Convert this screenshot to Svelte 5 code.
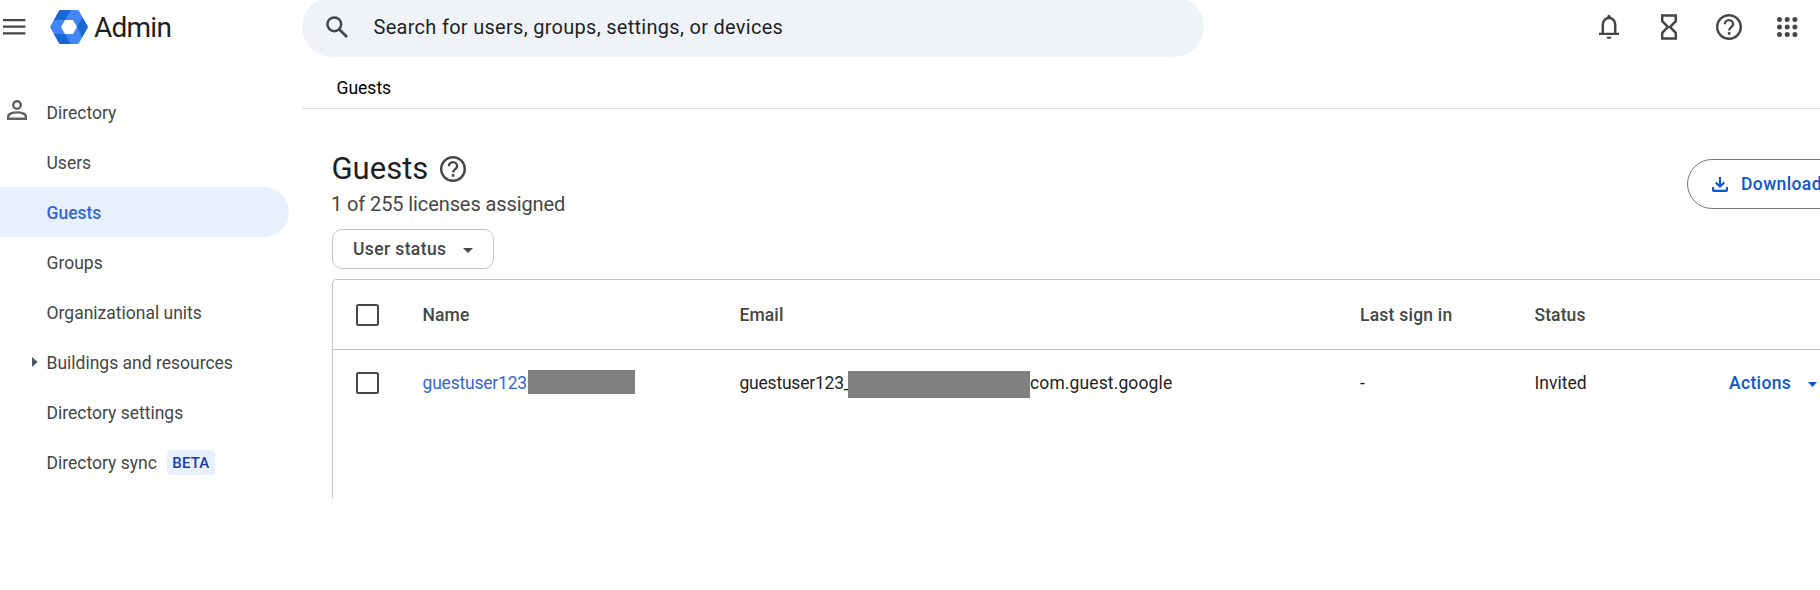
<script>
  const nav = [
    { label: 'Directory', icon: true },
    { label: 'Users' },
    { label: 'Guests', active: true },
    { label: 'Groups' },
    { label: 'Organizational units' },
    { label: 'Buildings and resources', expandable: true },
    { label: 'Directory settings' },
    { label: 'Directory sync', badge: 'BETA' }
  ];
</script>

{#snippet help()}
  <svg class="help" width="26" height="26" viewBox="0 0 26 26" fill="none" stroke="#444746">
    <circle cx="13" cy="13" r="11.8" stroke-width="2.4" />
    <path d="M8.9 10.3A4.1 4.1 0 0 1 17.1 10.2C17.1 13 13.1 13.3 13.1 16.6" stroke-width="2.4" />
    <rect x="11.8" y="18.1" width="2.6" height="2.6" fill="#444746" stroke="none" />
  </svg>
{/snippet}

<div class="page">
  <header>
    <div class="brand">
      <svg width="24" height="18" viewBox="0 0 24 18" fill="#444746">
        <path d="M1 1h22.4v2.2H1zM1 7.6h22.4v2.2H1zM1 14.2h22.4v2.2H1z" />
      </svg>
      <svg class="logo" width="38" height="34" viewBox="0 0 38 34">
        <path fill="#4285f4" fill-rule="evenodd" d="M10.8 0h16.4q1.3 0 2 1.2l8.1 14.5q.8 1.3 0 2.6l-8.1 14.5q-.7 1.2-2 1.2H10.8q-1.3 0-2-1.2L.7 18.3q-.8-1.3 0-2.6L8.8 1.2Q9.5 0 10.8 0zM15 10l-4 7 4 7h8l4-7-4-7z" />
        <path fill="#1967d2" d="M10.8 0H20.8L15 10H4L8.8 1.2Q9.5 0 10.8 0zM32.4 7.2l4.9 8.5q.8 1.3 0 2.6L32.3 27 27 17zM4 24h11l5.8 10h-10q-1.3 0-2-1.2z" />
      </svg>
      <span>Admin</span>
    </div>
    <div class="search">
      <svg width="22" height="22" viewBox="0 0 22 22" fill="none" stroke="#444746" stroke-width="2.5">
        <circle cx="8.3" cy="8.3" r="6.9" />
        <path d="M13.2 13.2l7.8 7.8" stroke-width="2.8" />
      </svg>
      <span>Search for users, groups, settings, or devices</span>
    </div>
    <div class="tools">
      <svg width="20" height="26" viewBox="0 0 20 26" fill="#444746">
        <path d="M0 18.7h20v2.4H0zM7.5 22.7h5a2.5 2.2 0 0 1-5 0zM8.3 3V2.4a1.7 1.7 0 0 1 3.4 0V3z" />
        <path d="M3.8 19.5v-9a6.2 6.4 0 0 1 12.4 0v9" fill="none" stroke="#444746" stroke-width="2.5" />
      </svg>
      <svg width="16" height="26" viewBox="0 0 16 26" fill="none" stroke="#444746" stroke-width="2.5">
        <path d="M1.2 1.4h13.6v5.8L9 13l5.8 5.8v5.8H1.2v-5.8L7 13 1.2 7.2z" />
      </svg>
      {@render help()}
      <svg width="21" height="20" viewBox="0 0 21 20" fill="#444746">
        {#each [2.5, 10.2, 17.9] as x}
          {#each [2.5, 10, 17.5] as y}
            <circle cx={x} cy={y} r="2.5" />
          {/each}
        {/each}
      </svg>
    </div>
  </header>

  <div class="body">
    <nav>
      {#each nav as item}
        <div class="item" class:active={item.active}>
          <div class="lead">
            {#if item.icon}
              <svg class="person" width="20" height="20" viewBox="0 0 20 20" fill="none" stroke="#616161" stroke-width="2.4">
                <circle cx="10" cy="5" r="3.8" />
                <path d="M1.2 18.8v-2.3c0-2.6 4.6-4.1 8.8-4.1s8.8 1.5 8.8 4.1v2.3z" />
              </svg>
            {:else if item.expandable}
              <svg class="expand" width="6" height="10" viewBox="0 0 6 10"><path fill="#455a64" d="M0 0l5.6 5L0 10z" /></svg>
            {/if}
          </div>
          <span>{item.label}</span>
          {#if item.badge}<b class="badge">{item.badge}</b>{/if}
        </div>
      {/each}
    </nav>

    <main>
      <div class="crumb">Guests</div>
      <section>
        <div class="top">
          <div>
            <h1><span>Guests</span>{@render help()}</h1>
            <p>1 of 255 licenses assigned</p>
          </div>
          <button class="download">
            <svg width="16" height="15" viewBox="0 0 16 15" fill="none" stroke="#0b57d0" stroke-width="2.1">
              <path d="M8 0v9.2M3.8 5.4L8 9.6l4.2-4.2M1.05 10v3q0 .9.9.9h12.1q.9 0 .9-.9v-3" />
            </svg>
            <span>Download</span>
          </button>
        </div>
        <button class="chip">
          <span>User status</span>
          <svg width="10" height="5" viewBox="0 0 10 5"><path fill="#444746" d="M0 0h10L5 5z" /></svg>
        </button>
        <div class="table">
          <div class="row head">
            <i class="box"></i>
            <span>Name</span>
            <span>Email</span>
            <span class="wide">Last sign in</span>
            <span>Status</span>
          </div>
          <div class="row">
            <i class="box"></i>
            <span class="cell name"><span class="user">guestuser123</span><i class="mask short"></i></span>
            <span class="cell"><span class="mail">guestuser123_</span><i class="mask long"></i><span class="domain">com.guest.google</span></span>
            <span>-</span>
            <span>Invited</span>
            <span class="actions">Actions
              <svg width="9" height="5" viewBox="0 0 9 5"><path fill="#0b57d0" d="M0 0h9L4.5 5z" /></svg>
            </span>
          </div>
        </div>
      </section>
    </main>
  </div>
</div>

<style>
  :global(body) { background: #fff; overflow: hidden; }
  .page { width: 1820px; height: 590px; overflow: hidden; font: 17.5px/24px Roboto, "Liberation Sans", sans-serif; color: #444746; }
  svg { display: block; flex: none; }
  button { font: inherit; background: #fff; box-sizing: border-box; }
  header { display: flex; height: 57px; }
  .brand { display: flex; align-items: center; width: 300px; height: 54px; padding-left: 2px; box-sizing: border-box; flex: none; }
  .logo { margin-left: 24px; }
  .brand span { margin-left: 6px; padding-top: 1px; font-size: 28px; letter-spacing: -.75px; line-height: 40px; color: #1f1f1f; }
  .search { display: flex; align-items: center; width: 902px; height: 60px; margin: -3px 0 0 2px; padding-left: 24px; box-sizing: border-box; border-radius: 30px; background: #eff3f8; flex: none; }
  .search span { margin-left: 25.5px; margin-top: -1px; font-size: 20px; letter-spacing: .29px; color: #1f1f1f; }
  .tools { display: flex; align-items: center; height: 54px; margin-left: 395px; }
  .tools svg:nth-child(2) { margin-left: 42px; }
  .tools svg:nth-child(3) { margin-left: 39px; }
  .tools svg:nth-child(4) { margin-left: 35px; }
  .body { display: flex; }
  nav { width: 302px; padding-top: 30px; box-sizing: border-box; flex: none; }
  .item { display: flex; align-items: center; width: 289px; height: 50px; box-sizing: border-box; padding-top: 1px; border-radius: 0 25px 25px 0; }
  .active { background: #e8effd; color: #3367d6; font-weight: 500; }
  .lead { width: 46.5px; flex: none; }
  .person { margin: -6px 0 0 7px; }
  .expand { margin: -1px 0 0 32px; }
  .badge { height: 25px; padding: 1px 5.5px 0; box-sizing: border-box; margin-left: 10px; border-radius: 4px; background: #e8effd; color: #1a3ab4; font-size: 15px; font-weight: 500; line-height: 25px; letter-spacing: .15px; }
  main { flex: 1; min-width: 0; }
  .crumb { height: 52px; padding: 19px 0 0 34.5px; box-sizing: border-box; border-bottom: 1px solid #e0e0e0; color: #000; }
  section { padding-left: 30px; }
  .top { display: flex; justify-content: space-between; height: 120px; }
  h1 { display: flex; align-items: center; margin: 0 0 0 -.5px; padding-top: 41px; height: 38px; font-size: 31px; font-weight: 400; line-height: 38px; color: #1f1f1f; }
  h1 :global(.help) { margin: 0 0 0 12px; }
  p { margin: 2px 0 0 -1px; font-size: 20px; line-height: 28px; letter-spacing: -.1px; }
  .download { display: flex; align-items: center; width: 200px; height: 50px; margin: 50px -67px 0 0; padding: 0 0 0 24px; border: 1px solid #747775; border-radius: 25px; color: #0b57d0; font-weight: 500; letter-spacing: .4px; }
  .download span { margin-left: 13px; }
  .chip { display: flex; align-items: center; width: 162px; height: 40px; padding: 0 0 0 20px; border: 1px solid #c4c7c5; border-radius: 10px; color: #444746; font-weight: 500; letter-spacing: .38px; }
  .chip svg { margin-left: 16.5px; margin-top: 2px; }
  .table { height: 219px; margin-top: 10px; box-sizing: border-box; border: 1px solid #c4c7c5; border-width: 1px 0 0 1px; border-top-left-radius: 5px; }
  .row { display: grid; grid-template-columns: 89.5px 317px 620.5px 174.5px 194.5px 1fr; align-items: center; height: 66px; box-sizing: border-box; color: #1f1f1f; }
  .head { height: 70px; border-bottom: 1px solid #c4c7c5; color: #444746; font-weight: 500; letter-spacing: .1px; }
  .wide { letter-spacing: .23px; }
  .box { width: 23px; height: 22px; margin-left: 23px; box-sizing: border-box; border: 2px solid #444746; border-radius: 2.5px; }
  .cell { display: flex; align-items: center; white-space: nowrap; }
  .name { color: #3367d6; letter-spacing: -.2px; }
  .user { width: 105.5px; }
  .mail { width: 108.5px; letter-spacing: -.22px; }
  .domain { letter-spacing: .12px; }
  .mask { background: #808080; flex: none; }
  .short { width: 107px; height: 24px; margin-top: -2px; }
  .long { width: 182px; height: 27px; margin-top: 3px; z-index: 1; }
  .actions { display: flex; align-items: center; color: #0b57d0; font-weight: 500; letter-spacing: .35px; }
  .actions svg { margin: 2px 0 0 16.5px; }
</style>
